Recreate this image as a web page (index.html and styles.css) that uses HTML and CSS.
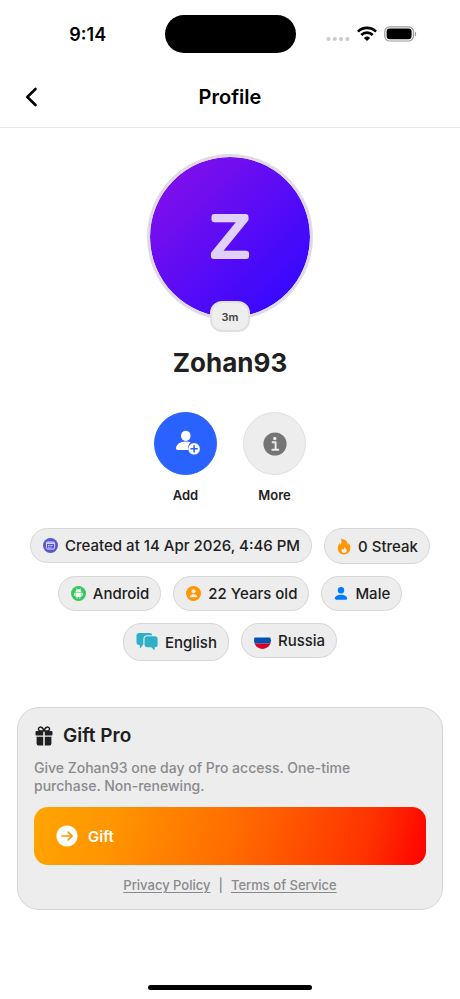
FILE: index.html
```html
<!DOCTYPE html>
<html lang="en">
<head>
<meta charset="utf-8">
<meta name="viewport" content="width=device-width, initial-scale=1">
<title>Profile</title>
<link rel="stylesheet" href="styles.css">
</head>
<body>
<div class="status">
  <div class="clock">9:14</div>
  <div class="island"></div>
  <div class="signals">
    <svg width="24" height="6" viewBox="0 0 24 6" fill="#ccc"><circle cx="2.5" cy="3" r="2.1"/><circle cx="8.8" cy="3" r="2.1"/><circle cx="15.1" cy="3" r="2.1"/><circle cx="21.4" cy="3" r="2.1"/></svg>
    <svg width="20" height="16" viewBox="0 0 20 16" fill="none" stroke="#000" stroke-width="2.7"><path d="M1 5.6a12.8 12.8 0 0 1 18 0"/><path d="M4.3 9a8.1 8.1 0 0 1 11.4 0"/><path d="M10 15 6.9 11.9a4.4 4.4 0 0 1 6.2 0z" fill="#000" stroke="none"/></svg>
    <svg width="33" height="16" viewBox="0 0 33 16"><rect x=".8" y=".8" width="28.6" height="14.2" rx="4.8" fill="none" stroke="#999" stroke-width="1.2"/><rect x="2.6" y="2.6" width="25" height="10.6" rx="3.2"/><path d="M30.8 5.4c1.8.6 1.8 4.4 0 5z" fill="#999"/></svg>
  </div>
</div>
<header class="bar">
  <button class="back" aria-label="Back"><svg width="14" height="20" viewBox="0 0 14 20" fill="none" stroke="#000" stroke-width="2.6" stroke-linecap="round" stroke-linejoin="round"><path d="M10.5 2 2.3 10l8.2 8"/></svg></button>
  <h1>Profile</h1>
</header>
<main>
  <section class="hero">
    <div class="avatar">
      <svg width="100" height="100" viewBox="0 0 100 100"><text class="initial" x="50" y="69" text-anchor="middle">Z</text></svg>
      <span class="ago">3m</span>
    </div>
    <h2>Zohan93</h2>
  </section>
  <div class="actions">
    <div class="action">
      <button class="round primary" id="add" aria-labelledby="add-label">
        <svg width="28" height="28" viewBox="0 0 28 28" fill="#fff"><ellipse cx="13.800" cy="5.800" rx="4.800" ry="5.100"/><path d="M4 18.600c0-4 3.800-7.200 9.800-7.200 2 0 3.600.3 5 .9-2.200 1.500-3.200 4.300-2.500 7.700H5.600c-1.100 0-1.600-.5-1.600-1.400z"/><circle cx="22.100" cy="18.800" r="5.800"/><path d="M22.100 15.700v6.200M19 18.800h6.200" stroke="#2962ff" stroke-width="1.500" stroke-linecap="round"/></svg>
      </button>
      <label id="add-label" for="add">Add</label>
    </div>
    <div class="action">
      <button class="round" id="more" aria-labelledby="more-label">
        <svg width="24" height="24" viewBox="0 0 24 24"><circle cx="12" cy="12" r="11.600" fill="#757575"/><circle cx="11.800" cy="6.500" r="1.700" fill="#ededed"/><path d="M9.600 10.300h3v7.200M9.300 17.700h6" fill="none" stroke="#ededed" stroke-width="1.900" stroke-linecap="round" stroke-linejoin="round"/></svg>
      </button>
      <label id="more-label" for="more">More</label>
    </div>
  </div>
  <ul class="chips">
    <li><svg width="15" height="15" viewBox="0 0 15 15"><circle cx="7.500" cy="7.500" r="7.500" fill="#5856d6"/><rect x="3.400" y="4" width="8.200" height="7" rx="1.300" fill="none" stroke="#e4e4fa" stroke-width="1"/><path d="M3.500 5.300h8" stroke="#e4e4fa" stroke-width="1.200"/><path d="M5 7.500h5M5 9.200h3.600" stroke="#e4e4fa" stroke-width=".9" stroke-dasharray="1 .5"/></svg>Created at 14 Apr 2026, 4:46 PM</li>
    <li class="streak"><svg width="14" height="17" viewBox="0 0 14 17"><path d="M3.900.7c4.300.4 7.100 2.800 6.700 6 .6-.3.900-.8 1-1.600 1.100 1.400 1.700 3.100 1.700 5 0 3.900-2.600 6.300-6.300 6.300S.8 14 .8 10.300c0-2.300 1-3.700 1.500-5.300.4.600.7 1.200.8 1.900C4.500 5.300 5.300 3.400 3.900.7z" fill="#ff9500"/><path d="M7.500 8.400c.3 1.600 2.300 2.300 2.300 4.200 0 1.500-1 2.500-2.600 2.500s-2.700-1-2.700-2.500c0-.9.400-1.700.9-2.200.1.600.3 1 .7 1.300.8-.8 1.400-1.800 1.400-3.300z" fill="#ededed"/></svg>0 Streak</li>
    <li><svg width="15" height="15" viewBox="0 0 15 15"><circle cx="7.500" cy="7.500" r="7.500" fill="#34c759"/><path d="M4.400 6.200a3.100 2.900 0 0 1 6.200 0zM4.400 6.700h6.200v3.500q0 .7-.7.700H9.400v1.400q0 .5-.5.500t-.5-.5v-1.400H6.600v1.400q0 .5-.5.500t-.5-.5v-1.400h-.5q-.7 0-.7-.7z" fill="#f1faf3"/><path d="M3.400 7.200v2.300M11.600 7.200v2.300M5.400 2.600l.8 1.200M9.600 2.600l-.8 1.200" stroke="#f1faf3" stroke-width=".8" stroke-linecap="round"/></svg>Android</li>
    <li><svg width="15" height="15" viewBox="0 0 15 15"><circle cx="7.500" cy="7.500" r="7.500" fill="#ff9500"/><circle cx="7.500" cy="5.300" r="2.100" fill="#f5efe6"/><path d="M3.700 11.200c0-1.800 1.400-3 3.800-3s3.800 1.200 3.800 3z" fill="#f5efe6"/></svg>22 Years old</li>
    <li><svg width="14" height="15" viewBox="0 0 14 15" fill="#007aff"><circle cx="7" cy="4.200" r="3.200"/><path d="M.8 12.600C.8 10.400 3.500 8.700 7 8.700s6.200 1.700 6.200 3.900c0 .8-.4 1.200-1.300 1.200H2.100c-.9 0-1.300-.4-1.300-1.200z"/></svg>Male</li>
    <li class="tall"><svg width="22" height="20" viewBox="0 0 22 20" fill="#30b0c7"><path d="M3 1h10.500q2.600 0 2.800 2.300h-4.600Q7.400 3.300 7.400 7.300v5L4.800 15.800q-1 .6-1-.5v-2.400H3Q.5 12.900.5 10.300V3.600Q.5 1 3 1z"/><path d="M11.400 4.300h7.500q2.700 0 2.700 2.700v5.600q0 2.600-2.700 2.600h-.2v2.200q0 1-.9.300l-2.500-2.500h-3.900q-2.900 0-2.900-2.600V7q0-2.700 2.900-2.700z"/></svg>English</li>
    <li><svg width="17" height="17" viewBox="0 0 17 17"><clipPath id="disc"><circle cx="8.500" cy="8.500" r="8.500"/></clipPath><g clip-path="url(#disc)"><path d="M0 0h17v5.700H0z" fill="#f0f0f0"/><path d="M0 5.500h17v6H0z" fill="#0052b4"/><path d="M0 11.500h17V17H0z" fill="#d80027"/></g></svg>Russia</li>
  </ul>
  <section class="card">
    <h3><svg width="20" height="20" viewBox="-1 0 20 20" fill="#202020"><g fill="none" stroke="#202020" stroke-width="1.500"><path d="M8.800 5C3.500 5.300 3.200 3.900 3.500 2.500 4 .4 8.200.2 8.800 5zM9.200 5c5.300.3 5.600-1.100 5.300-2.500C14 .4 9.800.2 9.200 5z"/></g><path d="M1.600 5h6.600v4.500H1.600Q.5 9.500.5 8.500V6.100Q.5 5 1.600 5zM9.800 5h6.600q1.100 0 1.100 1.100v2.400q0 1-1.100 1H9.800zM1.600 10.800h6.600v8.700H3.500q-1.900 0-1.900-1.900zM9.800 10.800h6.600v6.800q0 1.900-1.900 1.900H9.800z"/></svg>Gift Pro</h3>
    <p>Give Zohan93 one day of Pro access. One-time purchase. Non-renewing.</p>
    <button class="gift"><svg width="22" height="22" viewBox="0 0 22 22"><circle cx="11" cy="11" r="10.600" fill="#fff"/><path d="M6 11h10M12.300 7.200 16.100 11l-3.800 3.800" fill="none" stroke="#ff9800" stroke-width="1.700" stroke-linecap="round" stroke-linejoin="round"/></svg>Gift</button>
    <div class="legal"><a href="#privacy">Privacy Policy</a><span>|</span><a href="#terms">Terms of Service</a></div>
  </section>
</main>
<div class="home"></div>
</body>
</html>
```
FILE: styles.css
```css
* { box-sizing: border-box; }
body {
  margin: 0;
  min-height: 100vh;
  display: flex;
  flex-direction: column;
  background: #fff;
  color: #202020;
  font-family: Inter, "Liberation Sans", sans-serif;
}
button { padding: 0; border: 0; background: none; font: inherit; cursor: pointer; }
svg { display: block; flex: none; }
h1, h2, h3, p, ul { margin: 0; }

.status {
  display: grid;
  grid-template-columns: 1fr auto 1fr;
  align-items: center;
  padding-top: 15px;
  color: #000;
}
.clock { padding-left: 11px; text-align: center; font-size: 18px; font-weight: 600; }
.island { width: 131px; height: 38px; border-radius: 19px; background: #000; }
.signals { display: flex; align-items: center; gap: 7px; padding-left: 30px; }
.signals svg:first-child { margin-top: 10px; }

.bar {
  display: grid;
  grid-template-columns: 1fr auto 1fr;
  align-items: center;
  height: 75px;
  padding: 13px 25px 0;
  border-bottom: 1px solid #e6e6e6;
  color: #000;
}
.back { justify-self: start; }
h1 { font-size: 20px; line-height: 24px; font-weight: 600; }

main { padding: 26px 17px 0; }
.hero { display: flex; flex-direction: column; align-items: center; }
.avatar {
  position: relative;
  display: grid;
  place-items: center;
  width: 166px;
  height: 166px;
  border: 3px solid #dfdae7;
  border-radius: 50%;
  background: linear-gradient(135deg, #8b10e8, #3608ff 88%) padding-box;
}
.initial {
  font-family: "DejaVu Sans", sans-serif;
  font-size: 54px;
  font-weight: 200;
  fill: #e0d0fa;
  stroke: #e0d0fa;
  stroke-width: 6px;
  stroke-linejoin: round;
}
.ago {
  position: absolute;
  left: 50%;
  bottom: -15px;
  width: 40px;
  height: 31px;
  margin-left: -20px;
  border: 2px solid #e0e0e0;
  border-radius: 12px;
  background: #eee;
  color: #424242;
  font-size: 11px;
  line-height: 28px;
  font-weight: 600;
  text-align: center;
}
h2 { margin-top: 26px; font-size: 26px; line-height: 34px; font-weight: 700; }

.actions { display: flex; justify-content: center; gap: 26px; margin-top: 32px; }
.action { display: flex; flex-direction: column; align-items: center; gap: 12px; font-size: 13px; line-height: 16px; font-weight: 600; }
.round {
  display: grid;
  place-items: center;
  width: 63px;
  height: 63px;
  border: 1px solid #e0e0e0;
  border-radius: 50%;
  background: #ededed;
}
.primary { border-color: #2962ff; background: #2962ff; }

.chips {
  display: flex;
  flex-wrap: wrap;
  justify-content: center;
  align-items: flex-start;
  gap: 12px;
  margin-top: 25px;
  padding: 0 8px;
  list-style: none;
}
.chips li {
  display: flex;
  align-items: center;
  gap: 7px;
  height: 35px;
  padding: 0 11px 0 12px;
  border: 1px solid #d6d6d6;
  border-radius: 18px;
  background: #ededed;
  font-size: 15px;
  font-weight: 500;
}
.chips .streak { height: 36px; }
.chips .tall { height: 38px; }

.card {
  margin-top: 46px;
  padding: 16px;
  border: 1px solid #d6d6d6;
  border-radius: 22px;
  background: #ededed;
}
h3 { display: flex; align-items: center; gap: 9px; font-size: 19px; line-height: 24px; font-weight: 600; }
.card p { margin-top: 11px; padding-right: 24px; color: #8a8a8e; font-size: 14px; line-height: 18px; font-weight: 500; }
.gift {
  display: flex;
  align-items: center;
  gap: 10px;
  width: 100%;
  height: 58px;
  margin-top: 12px;
  padding: 0 22px;
  border-radius: 14px;
  background: linear-gradient(105deg, #ffa500, #ff9500 20%, #ff6a00 52%, #ff3300 84%, #ff0000);
  color: #fff;
  font-size: 15px;
  font-weight: 600;
}
.legal {
  display: flex;
  justify-content: center;
  gap: 8px;
  margin-top: 12px;
  color: #8a8a8e;
  font-size: 13px;
  line-height: 16px;
  font-weight: 500;
}
.legal a { color: inherit; text-underline-offset: 2px; }

.home { width: 164px; height: 5px; margin: auto auto 9px; border-radius: 3px; background: #000; }
```
